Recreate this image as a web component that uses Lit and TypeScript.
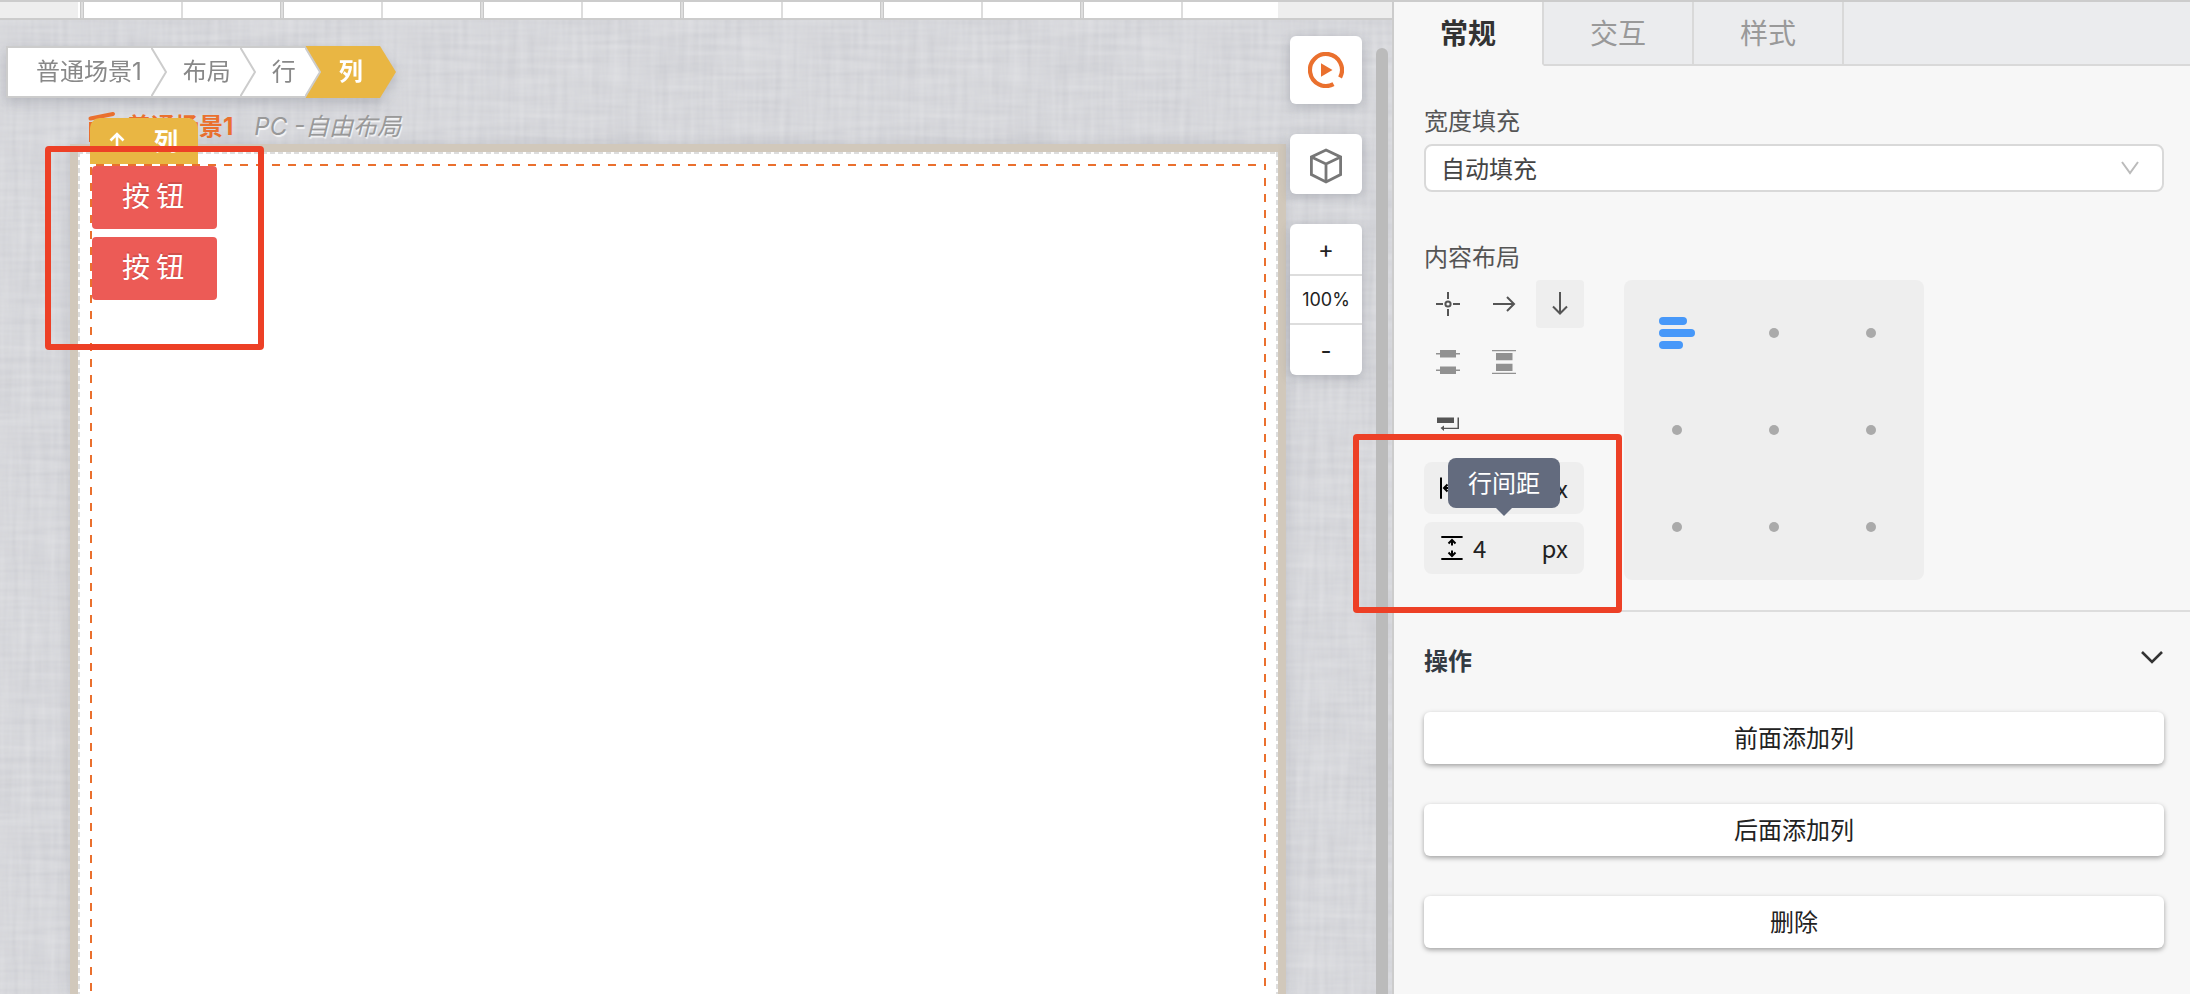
import { LitElement, html, css, svg } from "lit";
import { customElement, state } from "lit/decorators.js";

const sans = css`Inter, "Noto Sans CJK SC", sans-serif`;

@customElement("editor-ruler")
class EditorRuler extends LitElement {
  static styles = css`
    :host {
      display: flex;
      height: 16px;
      border-bottom: 2px solid #ccc;
      background: #eee;
    }
    .scale {
      flex: 1;
      margin: 0 114px 0 78px;
      background:
        repeating-linear-gradient(90deg, transparent 0 2px, #c8c8c8 2px 3px, #dedede 3px 5px, #c8c8c8 5px 6px, transparent 6px 103px, #ddd 103px 105px, transparent 105px 200px),
        #fff;
    }
  `;
  render() {
    return html`<div class="scale"></div>`;
  }
}

@customElement("path-crumbs")
class PathCrumbs extends LitElement {
  static styles = css`
    :host {
      display: flex;
      font: 24px/48px ${sans};
      filter: drop-shadow(0 5px 6px rgba(70, 75, 90, 0.22));
    }
    ol {
      display: flex;
      margin: 0;
      padding: 0;
      list-style: none;
    }
    li {
      display: flex;
      height: 52px;
    }
    a {
      box-sizing: border-box;
      padding: 0 9px 0 16px;
      border: solid #ccc;
      border-width: 2px 0;
      background: #fff;
      color: #888;
      text-decoration: none;
    }
    li:first-child a {
      padding-left: 28px;
      border-left-width: 2px;
    }
    .current a {
      padding: 0 17px 0 18px;
      border-color: #e9b643;
      background: #e9b643;
      color: #fff;
      font-weight: 700;
    }
    .tip {
      display: block;
      flex: none;
    }
  `;
  private items = ["普通场景1", "布局", "行", "列"];
  private tip(i: number) {
    const last = this.items.length - 1;
    if (i === last)
      return html`<svg class="tip" width="16" height="52"><path d="M0 0L16 26L0 52Z" fill="#e9b643" /></svg>`;
    return html`<svg class="tip" width="16" height="52">
      <rect width="16" height="52" fill=${i === last - 1 ? "#e9b643" : "#fff"} />
      ${i === last - 1 ? null : svg`<path d="M0 1H16M0 51H16" stroke="#ccc" stroke-width="2" />`}
      <path d="M-3 1H0L15 26L0 51H-3" fill="#fff" stroke="#ccc" stroke-width="2" />
    </svg>`;
  }
  render() {
    return html`<ol>
      ${this.items.map(
        (t, i) => html`<li class=${i === this.items.length - 1 ? "current" : ""}>
          <a href="#">${t}</a>${this.tip(i)}
        </li>`
      )}
    </ol>`;
  }
}

@customElement("canvas-tools")
class CanvasTools extends LitElement {
  static styles = css`
    :host {
      display: flex;
      flex-direction: column;
      gap: 30px;
      width: 72px;
      font: 18px/48px Inter, "Noto Sans CJK SC", sans-serif;
      color: #222;
    }
    .card {
      display: grid;
      border-radius: 6px;
      background: #fff;
      box-shadow: 0 3px 12px rgba(60, 66, 85, 0.25);
    }
    button {
      display: grid;
      place-items: center;
      padding: 0;
      border: 0;
      background: none;
      font: inherit;
      color: inherit;
    }
    .play {
      height: 68px;
    }
    .cube {
      height: 60px;
      padding-top: 4px;
    }
    .step {
      height: 50px;
      padding-top: 2px;
      font-size: 24px;
    }
    .value {
      border: solid #ddd;
      border-width: 2px 0;
      height: 47px;
      line-height: 48px;
      text-align: center;
    }
  `;
  render() {
    return html`
      <div class="card">
        <button class="play" aria-label="预览">
          <svg width="36" height="36" viewBox="-18 -18 36 36">
            <path d="M14.1 7.5A16 16 0 1 0 7.5 14.1" fill="none" stroke="#ea702e" stroke-width="4.2" />
            <path d="M-5 -6.8L6.5 0L-5 6.8Z" fill="#ea702e" />
          </svg>
        </button>
      </div>
      <div class="card">
        <button class="cube" aria-label="组件">
          <svg width="32" height="36" fill="none" stroke="#777" stroke-width="2.8">
            <path d="M16 2L30.6 9V26.6L16 34L1.4 26.6V9ZM1.4 9L16 16L30.6 9M16 16V34" />
          </svg>
        </button>
      </div>
      <div class="card">
        <button class="step" aria-label="放大">+</button>
        <div class="value">100%</div>
        <button class="step" aria-label="缩小">-</button>
      </div>
    `;
  }
}

@customElement("scene-board")
class SceneBoard extends LitElement {
  static styles = css`
    :host {
      display: flex;
      flex-direction: column;
      font: 24px/34px ${sans};
    }
    .title {
      display: flex;
      height: 34px;
      padding: 12px 0 0 18px;
      color: #ea702e;
    }
    .title b {
      margin-left: 11px;
    }
    .title i {
      margin-left: 21px;
      color: #999;
      text-shadow: 1px 2px 1px rgba(255, 255, 255, 0.8);
    }
    .board {
      position: relative;
      flex: 1;
      display: flex;
      border: solid #d1c8bb;
      border-width: 8px 8px 0;
      background:
        repeating-linear-gradient(90deg, #ddd 0 5px, transparent 5px 8px) 0 0 / 100% 2px no-repeat,
        repeating-linear-gradient(180deg, #ddd 0 5px, transparent 5px 8px) 0 0 / 2px 100% no-repeat,
        repeating-linear-gradient(180deg, #ddd 0 5px, transparent 5px 8px) 100% 0 / 2px 100% no-repeat,
        #fff;
      box-shadow: 0 0 12px rgba(60, 66, 85, 0.15);
    }
    .column {
      position: relative;
      flex: 1;
      display: flex;
      flex-direction: column;
      align-items: flex-start;
      gap: 8px;
      margin: 12px 12px 0;
      padding: 2px;
      background:
        repeating-linear-gradient(90deg, transparent 0 6px, #ea702e 6px 14px, transparent 14px 16px) 0 0 / 100% 2px no-repeat,
        repeating-linear-gradient(180deg, transparent 0 3px, #ea702e 3px 11px, transparent 11px 16px) 0 0 / 2px 100% no-repeat,
        repeating-linear-gradient(180deg, #ea702e 0 6px, transparent 6px 14px, #ea702e 14px 16px) 100% 0 / 2px 100% no-repeat;
    }
    .tag {
      position: absolute;
      left: 0;
      bottom: 100%;
      box-sizing: border-box;
      display: flex;
      justify-content: space-between;
      width: 108px;
      height: 46px;
      padding: 7px 20px 0 19px;
      border-radius: 10px 10px 0 0;
      background: #e9b643;
      color: #fff;
      font-weight: 700;
    }
    .tag svg {
      margin-top: 6px;
    }
    .item {
      height: 63px;
      padding: 0 33px 5px 30px;
      border: 0;
      border-radius: 4px;
      background: #ec5b56;
      color: #fff;
      font: 28px/58px "Noto Sans CJK SC", sans-serif;
      text-shadow: 0 -2px rgba(0, 0, 0, 0.12);
    }
    .mark {
      position: absolute;
      left: -33px;
      top: -6px;
      box-sizing: border-box;
      width: 219px;
      height: 204px;
      border: 6px solid #ed4026;
      border-radius: 4px;
    }
  `;
  render() {
    return html`
      <div class="title">
        <svg width="28" height="34" fill="none" stroke="#ea702e" stroke-width="4" stroke-linecap="round">
          <path d="M2.500 8.500L25 4M3 14V30H25V14Z" />
        </svg>
        <b>普通场景1</b><i>PC -自由布局</i>
      </div>
      <div class="board">
        <div class="column">
          <div class="tag">
            <svg width="16" height="20" fill="none" stroke="#fff" stroke-width="2.600"><path d="M8 20V3M1.500 9.500L8 3L14.500 9.500" /></svg>
            <span>列</span>
          </div>
          <button class="item">按 钮</button>
          <button class="item">按 钮</button>
        </div>
        <div class="mark"></div>
      </div>
    `;
  }
}

@customElement("layout-picker")
class LayoutPicker extends LitElement {
  static styles = css`
    :host {
      display: flex;
      gap: 40px;
      font: 24px/52px "Noto Sans CJK SC", sans-serif;
      color: #222;
    }
    .left {
      flex: none;
      width: 160px;
    }
    .modes {
      display: grid;
      grid-template-columns: repeat(3, 48px);
      gap: 10px 8px;
    }
    .wrap {
      margin: 14px 0;
    }
    button {
      display: grid;
      place-items: center;
      padding: 0;
      border: 0;
      border-radius: 4px;
      background: none;
      color: #555;
    }
    .mode {
      width: 48px;
      height: 48px;
    }
    .on {
      background: #eee;
    }
    .gaps {
      position: relative;
      display: grid;
      grid-template-columns: minmax(0, 1fr);
      gap: 8px;
    }
    .field {
      position: relative;
      display: flex;
      align-items: center;
      height: 52px;
      padding: 0 16px;
      border-radius: 8px;
      background: #eee;
      line-height: 50px;
    }
    .field svg {
      flex: none;
    }
    input {
      flex: 1;
      width: 0;
      min-width: 0;
      margin-left: 9px;
      padding: 0;
      border: 0;
      background: none;
      color: inherit;
      font: inherit;
      outline: none;
    }
    .tooltip {
      position: absolute;
      left: 24px;
      right: 24px;
      bottom: 66px;
      height: 50px;
      border-radius: 8px;
      background: #636b7e;
      color: #fff;
      line-height: 48px;
      text-align: center;
    }
    .tooltip::after {
      content: "";
      position: absolute;
      top: 100%;
      left: calc(50% - 8px);
      border: 8px solid transparent;
      border-top-color: #636b7e;
      border-bottom: 0;
    }
    .mark {
      position: absolute;
      left: -71px;
      top: -28px;
      box-sizing: border-box;
      width: 269px;
      height: 179px;
      border: 6px solid #ed4026;
      border-radius: 4px;
      pointer-events: none;
    }
    .matrix {
      display: grid;
      grid-template-columns: repeat(3, 97px);
      grid-template-rows: repeat(3, 97px);
      place-content: center;
      width: 300px;
      height: 300px;
      border-radius: 8px;
      background: #eee;
    }
    .dot {
      width: 10px;
      height: 10px;
      border-radius: 5px;
      background: #aaa;
    }
  `;
  @state() private align = 0;

  private spacing(turned: boolean) {
    return html`<svg width="24" height="24" fill="none" stroke="#000" stroke-width="2">
      <g transform=${turned ? "rotate(-90 12 12)" : ""}>
        <path d="M1.300 1H22.600M1.300 23H22.600M12 4V9.500M8.500 7.500L12 4L15.500 7.500M12 20V14.500M8.500 16.500L12 20L15.500 16.500" />
      </g>
    </svg>`;
  }
  render() {
    return html`
      <div class="left">
        <div class="modes">
          <button class="mode" aria-label="自由">
            <svg width="24" height="24" fill="none" stroke="currentColor" stroke-width="2">
              <circle cx="12" cy="12" r="2.600" /><path d="M0 12H7M17 12H24M12 0V7M12 17V24" />
            </svg>
          </button>
          <button class="mode" aria-label="横向">
            <svg width="24" height="24" fill="none" stroke="currentColor" stroke-width="2"><path d="M1 12H22M15 5L22 12L15 19" /></svg>
          </button>
          <button class="mode on" aria-label="纵向">
            <svg width="24" height="24" fill="none" stroke="currentColor" stroke-width="2"><path d="M12 0V21.500M5 14.500L12 21.500L19 14.500" /></svg>
          </button>
          <button class="mode" aria-label="环绕分布">
            <svg width="24" height="24" fill="#919191"><path d="M4 0H20V7.500H4ZM4 16.500H20V24H4ZM0 3.100H24V4.600H0ZM0 19.600H24V21.100H0Z" /></svg>
          </button>
          <button class="mode" aria-label="两端分布">
            <svg width="24" height="24" fill="#919191"><path d="M4 3H20.500V10.300H4ZM4 13.700H20.500V21H4ZM0 0H24V1.300H0ZM0 22.700H24V24H0Z" /></svg>
          </button>
        </div>
        <div class="wrap">
          <button class="mode" aria-label="换行">
            <svg width="24" height="16" fill="#555">
              <path d="M1 1.500H18V7H1ZM21.500 1.500H23V13H8V15L4.500 12L8 9.500V11.700H21.500Z" />
            </svg>
          </button>
        </div>
        <div class="gaps">
          <label class="field">${this.spacing(true)}<input aria-label="列间距" value="4" /><span>px</span></label>
          <label class="field">
            ${this.spacing(false)}<input aria-label="行间距" value="4" /><span>px</span>
            <div class="tooltip" role="tooltip">行间距</div>
          </label>
          <div class="mark"></div>
        </div>
      </div>
      <div class="matrix">
        ${Array.from({ length: 9 }, (_, i) => html`
          <button aria-label="对齐 ${i + 1}" @click=${() => (this.align = i)}>
            ${i === this.align
              ? html`<svg width="36" height="32" fill="#4798f9">
                  <rect width="28" height="8" rx="4" /><rect y="12" width="36" height="8" rx="4" /><rect y="24" width="24" height="8" rx="4" />
                </svg>`
              : html`<span class="dot"></span>`}
          </button>`)}
      </div>
    `;
  }
}

@customElement("property-panel")
class PropertyPanel extends LitElement {
  static styles = css`
    :host {
      display: block;
      border-left: 2px solid #ccc;
      background: #f7f7f7;
      font: 24px/36px "Noto Sans CJK SC", sans-serif;
      color: #222;
    }
    .tabs {
      display: flex;
      height: 64px;
    }
    .tab {
      box-sizing: border-box;
      width: 150px;
      padding: 0 0 2px;
      border: solid #d9d9d9;
      border-width: 0 2px 2px 0;
      background: #ebecee;
      color: #999;
      font: 28px/60px "Noto Sans CJK SC", sans-serif;
    }
    .tab.on {
      border-bottom-color: #f7f7f7;
      background: #f7f7f7;
      color: #333;
      font-weight: 700;
    }
    .rest {
      flex: 1;
      border-bottom: 2px solid #d9d9d9;
      background: #ebecee;
    }
    .section {
      padding: 36px 26px 0 30px;
    }
    .label {
      display: block;
      color: #555;
    }
    .pick {
      display: grid;
      align-items: center;
      margin: 6px 0 46px;
    }
    select {
      grid-area: 1 / 1;
      appearance: none;
      height: 48px;
      padding: 0 15px 1px;
      border: 2px solid #d9d9d9;
      border-radius: 8px;
      background: #fff;
      color: #444;
      font: 24px/36px "Noto Sans CJK SC", sans-serif;
    }
    .pick svg {
      grid-area: 1 / 1;
      justify-self: end;
      margin-right: 25px;
      pointer-events: none;
    }
    layout-picker {
      margin: 6px 0 30px;
    }
    .ops {
      padding: 30px 26px 0 30px;
      border-top: 2px solid #ddd;
    }
    .head {
      display: flex;
      justify-content: space-between;
      margin-bottom: 34px;
      font-weight: 700;
      color: #333a42;
    }
    .head svg {
      margin: 8px 1px 0 0;
    }
    .list {
      display: grid;
      gap: 40px;
    }
    .op {
      height: 52px;
      padding: 0 0 2px;
      border: 0;
      border-radius: 6px;
      background: #fff;
      color: #222;
      font: 24px/50px "Noto Sans CJK SC", sans-serif;
      box-shadow: 0 2px 5px rgba(0, 0, 0, 0.35);
    }
  `;
  render() {
    return html`
      <div class="tabs" role="tablist">
        <button class="tab on" role="tab">常规</button>
        <button class="tab" role="tab">交互</button>
        <button class="tab" role="tab">样式</button>
        <div class="rest"></div>
      </div>
      <div class="section">
        <label class="label" for="fill">宽度填充</label>
        <div class="pick">
          <select id="fill"><option>自动填充</option></select>
          <svg width="18" height="14" fill="none" stroke="#bbb" stroke-width="2"><path d="M1 1L9 12L17 1" /></svg>
        </div>
        <div class="label">内容布局</div>
        <layout-picker></layout-picker>
      </div>
      <div class="ops">
        <div class="head">
          <span>操作</span>
          <svg width="22" height="14" fill="none" stroke="#333" stroke-width="2.600"><path d="M1 2L11 12L21 2" /></svg>
        </div>
        <div class="list">
          <button class="op">前面添加列</button>
          <button class="op">后面添加列</button>
          <button class="op">删除</button>
        </div>
      </div>
    `;
  }
}

@customElement("app-root")
class AppRoot extends LitElement {
  static styles = css`
    :host {
      box-sizing: border-box;
      display: grid;
      grid-template-columns: minmax(0, 1fr) 798px;
      height: 100vh;
      overflow: hidden;
      border-top: 2px solid #ccc;
    }
    .work {
      display: flex;
      flex-direction: column;
      min-height: 0;
    }
    .canvas {
      position: relative;
      flex: 1;
      display: flex;
      flex-direction: column;
      padding: 26px 106px 0 6px;
      background:
        url("data:image/svg+xml,<svg xmlns='http://www.w3.org/2000/svg' width='400' height='400'><filter id='f' x='0' y='0' width='1' height='1'><feTurbulence type='fractalNoise' baseFrequency='.16 .012' numOctaves='2' stitchTiles='stitch'/><feColorMatrix values='0 0 0 0 1 0 0 0 0 1 0 0 0 0 1 .3 0 0 0 -.05'/></filter><rect width='400' height='400' filter='url(%23f)'/></svg>"),
        url("data:image/svg+xml,<svg xmlns='http://www.w3.org/2000/svg' width='400' height='400'><filter id='f' x='0' y='0' width='1' height='1'><feTurbulence type='fractalNoise' baseFrequency='.012 .16' numOctaves='2' seed='4' stitchTiles='stitch'/><feColorMatrix values='0 0 0 0 1 0 0 0 0 1 0 0 0 0 1 .3 0 0 0 -.05'/></filter><rect width='400' height='400' filter='url(%23f)'/></svg>"),
        #cdced3;
    }
    scene-board {
      flex: 1;
      margin-left: 64px;
    }
    canvas-tools {
      position: absolute;
      top: 16px;
      right: 30px;
    }
    .scroll {
      position: absolute;
      top: 28px;
      right: 4px;
      bottom: 0;
      width: 12px;
      border-radius: 6px 6px 0 0;
      background: #bbb;
    }
    property-panel {
      position: relative;
    }
  `;
  render() {
    return html`
      <div class="work">
        <editor-ruler></editor-ruler>
        <div class="canvas">
          <path-crumbs></path-crumbs>
          <scene-board></scene-board>
          <canvas-tools></canvas-tools>
          <div class="scroll"></div>
        </div>
      </div>
      <property-panel></property-panel>
    `;
  }
}
